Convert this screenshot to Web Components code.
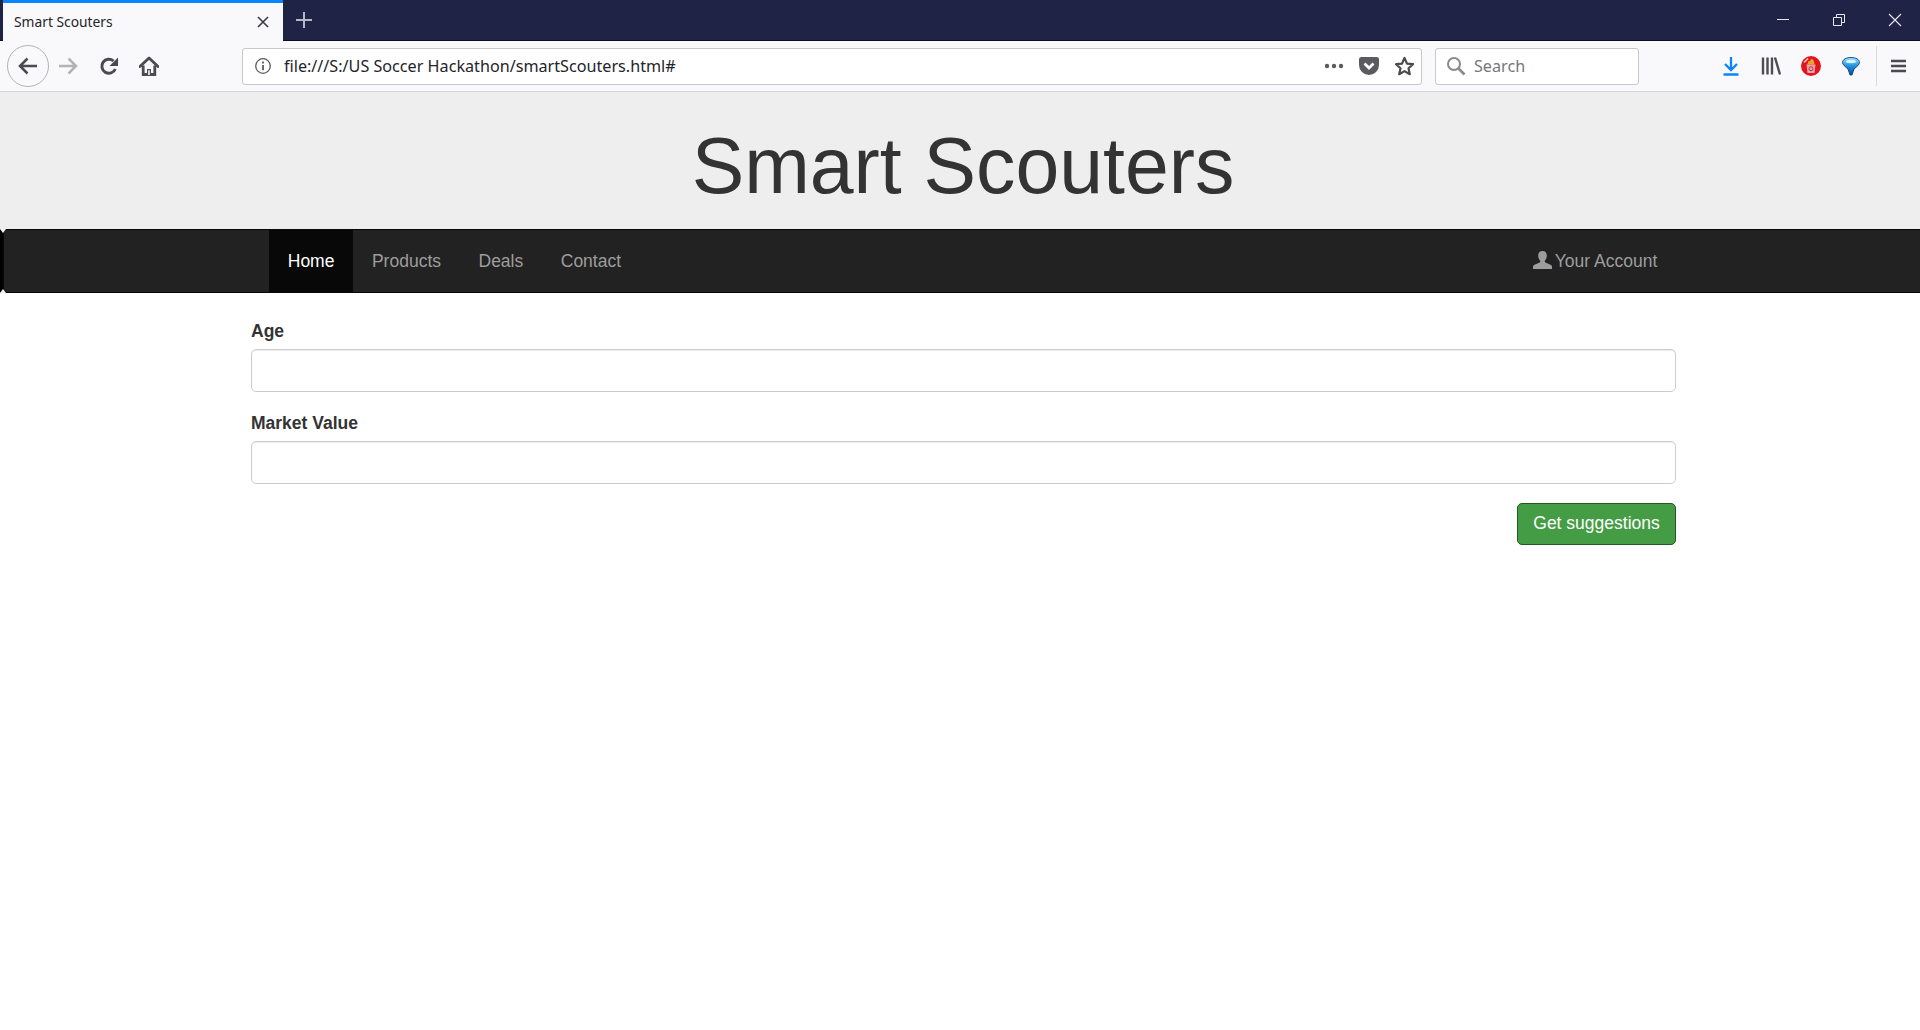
<!DOCTYPE html>
<html>
<head>
<meta charset="utf-8">
<title>Smart Scouters</title>
<style>
  html, body { margin: 0; padding: 0; height: 100%; background: #fff; overflow: hidden; }
  body { display: flex; flex-direction: column; font-family: "Liberation Sans", Arial, sans-serif; }
  site-content { flex: 1; }
</style>
</head>
<body>
<browser-tabs title-text="Smart Scouters"></browser-tabs>
<browser-toolbar url="file:///S:/US Soccer Hackathon/smartScouters.html#"></browser-toolbar>
<site-banner>Smart Scouters</site-banner>
<site-nav></site-nav>
<site-content>
  <form-field label="Age"></form-field>
  <form-field label="Market Value"></form-field>
  <submit-button>Get suggestions</submit-button>
</site-content>

<script>
// Window title bar with the single tab and window buttons
class BrowserTabs extends HTMLElement {
  constructor() {
    super();
    this.attachShadow({ mode: "open" });
    this.shadowRoot.innerHTML = `
      <style>
        :host { display: flex; height: 41px; background: #1f2345; border-bottom: 1px solid #0c0f24; box-sizing: border-box; align-items: stretch; }
        .tab {
          width: 280px; margin-left: 3px; box-sizing: border-box; background: #f9f9fb;
          border-top: 3px solid #0a84ff; margin-bottom: -1px;
          display: flex; align-items: center; justify-content: space-between; padding: 0 13px 1px 11px;
          font: 13.8px "Noto Sans", "Open Sans", sans-serif; color: #24242a;
        }
        .new { margin-left: 12px; width: 20px; display: flex; align-items: center; }
        .spacer { flex: 1; }
        .win { display: flex; align-items: center; gap: 42px; padding-right: 18px; }
        svg { display: block; }
      </style>
      <div class="tab"><span id="t"></span>
        <svg width="14" height="14" viewBox="0 0 14 14"><path d="M2 2l10 10M12 2L2 12" stroke="#3a3a40" stroke-width="1.6" fill="none"/></svg>
      </div>
      <div class="new"><svg width="18" height="18" viewBox="0 0 18 18"><path d="M9 1v16M1 9h16" stroke="#b6b8c6" stroke-width="2" fill="none"/></svg></div>
      <div class="spacer"></div>
      <div class="win">
        <svg width="14" height="14" viewBox="0 0 14 14"><path d="M1 6.500h12" stroke="#e8e8ee" stroke-width="1" fill="none"/></svg>
        <svg width="14" height="14" viewBox="0 0 14 14"><path d="M1.500 4.500h8v8h-8zM4.500 4.500v-3h8v8h-3" stroke="#e8e8ee" stroke-width="1" fill="none"/></svg>
        <svg width="14" height="14" viewBox="0 0 14 14"><path d="M1 1l12 12M13 1L1 13" stroke="#e8e8ee" stroke-width="1.100" fill="none"/></svg>
      </div>`;
    this.shadowRoot.getElementById("t").textContent = this.getAttribute("title-text");
  }
}
customElements.define("browser-tabs", BrowserTabs);

// Navigation toolbar: back/forward, url bar, search and extension icons
class BrowserToolbar extends HTMLElement {
  constructor() {
    super();
    this.attachShadow({ mode: "open" });
    this.shadowRoot.innerHTML = `
      <style>
        :host {
          display: flex; align-items: center; height: 51px; box-sizing: border-box; background: #f9f9fb;
          border-bottom: 1px solid #d8d8da; font: 16.16px "Noto Sans", "Open Sans", sans-serif; color: #24242a;
        }
        svg { display: block; }
        .nav { display: flex; align-items: center; width: 242px; padding-left: 7px; box-sizing: border-box; }
        .back { width: 42px; height: 42px; border: 1px solid #b4b4b6; border-radius: 50%; box-sizing: border-box; background: #f9f9fb; display: flex; align-items: center; justify-content: center; }
        .fwd { margin-left: 8px; } .reload { margin-left: 20px; } .home { margin-left: 20px; }
        .box { height: 37px; box-sizing: border-box; background: #fff; border: 1px solid #c8c8ca; border-radius: 3px; display: flex; align-items: center; }
        .url { width: 1180px; padding: 0 6px 0 11px; }
        .url .addr { margin-left: 12px; flex: 1; white-space: pre; }
        .url .tools { display: flex; align-items: center; gap: 15px; }
        .search { width: 204px; margin-left: 13px; padding-left: 10px; color: #77777b; }
        .search span { margin-left: 8px; }
        .ext { flex: 1; display: flex; align-items: center; padding-left: 83px; }
        .ext > * { flex: none; }
        .sep { width: 1px; height: 40px; background: #dcdcde; margin-left: 15px; margin-right: 14px; }
      </style>
      <div class="nav">
        <div class="back"><svg width="22" height="20" viewBox="0 0 22 20"><path d="M20 10H3M10.500 2.500L3 10l7.500 7.500" stroke="#4a4a4f" stroke-width="2.500" fill="none"/></svg></div>
        <svg class="fwd" width="22" height="20" viewBox="0 0 22 20"><path d="M2 10h17M11.500 2.500L19 10l-7.500 7.500" stroke="#b3b3b6" stroke-width="2.500" fill="none"/></svg>
        <svg class="reload" width="20" height="20" viewBox="0 0 20 20"><path d="M16.300 13A7 7 0 1 1 14.500 5" stroke="#4a4a4f" stroke-width="3" fill="none"/><path d="M19 1.500v8.500H10.500z" fill="#4a4a4f"/></svg>
        <svg class="home" width="20" height="20" viewBox="0 0 20 20"><path d="M1 10.500L10 2l9 8.500" stroke="#4a4a4f" stroke-width="2.800" fill="none" stroke-linejoin="round" stroke-linecap="round"/><path d="M4.200 9.500V18.500h11.600V9.500" stroke="#4a4a4f" stroke-width="2.800" fill="none"/><path d="M8 19.500v-6.500h4v6.500z" fill="#4a4a4f"/><path d="M9.200 19v-4.800h1.600V19z" fill="#f9f9fb"/></svg>
      </div>
      <div class="box url">
        <svg width="18" height="18" viewBox="0 0 18 18"><circle cx="9" cy="9" r="7.300" stroke="#5b5b60" stroke-width="1.300" fill="none"/><path d="M9 8v5.200M9 4.600v1.900" stroke="#5b5b60" stroke-width="1.800" fill="none"/></svg>
        <span class="addr" id="addr"></span>
        <div class="tools">
          <svg width="20" height="6" viewBox="0 0 20 6"><circle cx="3" cy="3" r="2.200" fill="#5b5b60"/><circle cx="10" cy="3" r="2.200" fill="#5b5b60"/><circle cx="17" cy="3" r="2.200" fill="#5b5b60"/></svg>
          <svg width="20" height="18" viewBox="0 0 20 18"><path d="M2.500 0h15A2.500 2.500 0 0 1 20 2.500V8a10 10 0 0 1-20 0V2.500A2.500 2.500 0 0 1 2.500 0z" fill="#5a5a5f"/><path d="M5.500 6.500L10 11l4.500-4.500" stroke="#fff" stroke-width="2.800" fill="none"/></svg>
          <svg width="21" height="20" viewBox="0 0 21 20"><path d="M10.500 2l2.500 5.600 6 .6-4.500 4 1.300 6-5.300-3.100-5.300 3.100 1.300-6-4.500-4 6-.6z" stroke="#4a4a4f" stroke-width="2.200" fill="none" stroke-linejoin="round"/></svg>
        </div>
      </div>
      <div class="box search">
        <svg width="20" height="20" viewBox="0 0 20 20"><circle cx="8" cy="8" r="6" stroke="#8a8a8e" stroke-width="2" fill="none"/><path d="M12.500 12.500L18.500 18.500" stroke="#8a8a8e" stroke-width="2.600" fill="none"/></svg>
        <span>Search</span>
      </div>
      <div class="ext">
        <svg width="18" height="20" viewBox="0 0 18 20"><path d="M9 1v12M3 8l6 6 6-6" stroke="#0a84ff" stroke-width="2.300" fill="none"/><path d="M1.500 18.500h15" stroke="#0a84ff" stroke-width="2.500"/></svg>
        <svg style="margin-left:21px" width="20" height="20" viewBox="0 0 20 20"><path d="M2 1.500v17M6.500 1.500v17M11 1.500v17M14 1.500l5 17" stroke="#4d4d52" stroke-width="2.400" fill="none"/></svg>
        <svg style="margin-left:20px" width="20" height="20" viewBox="0 0 20 20"><circle cx="10" cy="10" r="10" fill="#e3141e"/><path d="M3 6.500L7 2.500" stroke="#f7d0d0" stroke-width="1.400"/><path d="M5.500 8.500h9l-1 8.500h-7z" fill="#f5a3ab"/><path d="M6.500 8.500l.5-3 2-.5 1-2 2 .5 1 2 .5 3z" fill="#e6a533"/><circle cx="10" cy="12.700" r="2" stroke="#9e3340" stroke-width="1" fill="none"/></svg>
        <svg style="margin-left:20px" width="20" height="20" viewBox="0 0 20 20"><defs><linearGradient id="f" x1="0" y1="0" x2="0" y2="1"><stop offset="0" stop-color="#9fe2ff"/><stop offset=".5" stop-color="#1f8fe0"/><stop offset="1" stop-color="#0b4f96"/></linearGradient></defs><path d="M1.500 6.500C1.500 3.500 5 1.500 10 1.500s8.500 2 8.500 5c0 2-2.800 4.300-5.500 6.500l-2 6H9l-2-6C4.300 10.800 1.500 8.500 1.500 6.500z" fill="url(#f)" stroke="#0b3f78" stroke-width=".9"/><ellipse cx="10" cy="5.500" rx="5" ry="1.700" fill="#d9f3ff"/></svg>
        <div class="sep"></div>
        <svg width="15" height="14" viewBox="0 0 15 14"><path d="M0 2h15M0 7h15M0 12h15" stroke="#4a4a4f" stroke-width="2.400" fill="none"/></svg>
      </div>`;
    this.shadowRoot.getElementById("addr").textContent = this.getAttribute("url");
  }
}
customElements.define("browser-toolbar", BrowserToolbar);

// Grey jumbotron with the site title
class SiteBanner extends HTMLElement {
  constructor() {
    super();
    this.attachShadow({ mode: "open" });
    this.shadowRoot.innerHTML = `
      <style>
        :host {
          display: block; height: 137px; background: #eee; text-align: center; color: #333;
          font: 78.75px/1.1 "Liberation Sans", Arial, sans-serif; padding: 30.5px 0 0 6px; box-sizing: border-box;
        }
      </style>
      <slot></slot>`;
  }
}
customElements.define("site-banner", SiteBanner);

// Dark inverse navbar
class SiteNav extends HTMLElement {
  constructor() {
    super();
    this.attachShadow({ mode: "open" });
    this.shadowRoot.innerHTML = `
      <style>
        :host {
          display: block; position: relative; height: 64px; background: #000;
          font: 17.5px "Liberation Sans", Arial, sans-serif; color: #9d9d9d;
        }
        /* small notches where the bar's rounded corners meet the page */
        :host::before, :host::after {
          content: ""; position: absolute; left: 0; width: 6px; height: 4px; background: #f4f4f4;
        }
        :host::before { top: 0; clip-path: polygon(0 0, 100% 0, 50% 100%); }
        :host::after { bottom: 0; clip-path: polygon(50% 0, 100% 100%, 0 100%); }
        .bar {
          display: flex; justify-content: space-between; height: 100%; box-sizing: border-box; margin-left: 3px;
          background: #222; border: 1px solid #080808; border-right: 0; border-radius: 4px 0 0 4px; padding: 0 244px 0 265px;
        }
        ul { display: flex; list-style: none; margin: 0; padding: 0; }
        a { display: flex; align-items: center; gap: 3px; height: 100%; padding: 0 18.75px; color: inherit; text-decoration: none; }
        .active a { background: #080808; color: #fff; }
        svg { display: block; margin-top: -3px; }
      </style>
      <div class="bar">
        <ul>
          <li class="active"><a href="#">Home</a></li>
          <li><a href="#">Products</a></li>
          <li><a href="#">Deals</a></li>
          <li><a href="#">Contact</a></li>
        </ul>
        <ul>
          <li><a href="#"><svg width="19" height="18" viewBox="0 0 19 18"><path d="M9.500 0c3 0 4.300 2 4.300 4.800 0 2-.8 3.700-1.800 4.800-.5.600-.4 1.500.4 1.900l5.600 2.600c.7.400 1 1 1 1.900V18H0v-2c0-.9.300-1.500 1-1.900l5.600-2.600c.8-.4.900-1.300.4-1.900-1-1.100-1.800-2.800-1.800-4.800C5.200 2 6.500 0 9.500 0z" fill="#9d9d9d"/></svg>Your Account</a></li>
        </ul>
      </div>`;
  }
}
customElements.define("site-nav", SiteNav);

// Page body column, holds the form fields and the button
class SiteContent extends HTMLElement {
  constructor() {
    super();
    this.attachShadow({ mode: "open" });
    this.shadowRoot.innerHTML = `
      <style>
        :host { display: flex; flex-direction: column; padding: 25.5px 244px 0 251px; background: #fff; }
      </style>
      <slot></slot>`;
  }
}
customElements.define("site-content", SiteContent);

class FormField extends HTMLElement {
  constructor() {
    super();
    this.attachShadow({ mode: "open" });
    this.shadowRoot.innerHTML = `
      <style>
        :host { display: block; margin-bottom: 19px; font: 17.5px/25px "Liberation Sans", Arial, sans-serif; color: #333; }
        label { display: block; font-weight: 700; margin-bottom: 5px; }
        input {
          display: block; width: 100%; height: 43px; box-sizing: border-box; background: #fff;
          border: 1.25px solid #ccc; border-radius: 5px; box-shadow: inset 0 1px 1px rgba(0,0,0,.075); outline: 0;
        }
      </style>
      <label></label><input type="text">`;
    this.shadowRoot.querySelector("label").textContent = this.getAttribute("label");
  }
}
customElements.define("form-field", FormField);

class SubmitButton extends HTMLElement {
  constructor() {
    super();
    this.attachShadow({ mode: "open" });
    this.shadowRoot.innerHTML = `
      <style>
        :host { display: flex; justify-content: flex-end; }
        button {
          width: 159px; height: 42px; padding: 0; background: #449d44; border: 1.25px solid #255625; border-radius: 5px;
          color: #fff; font: 17.5px "Liberation Sans", Arial, sans-serif;
        }
      </style>
      <button type="button"><slot></slot></button>`;
  }
}
customElements.define("submit-button", SubmitButton);
</script>
</body>
</html>
